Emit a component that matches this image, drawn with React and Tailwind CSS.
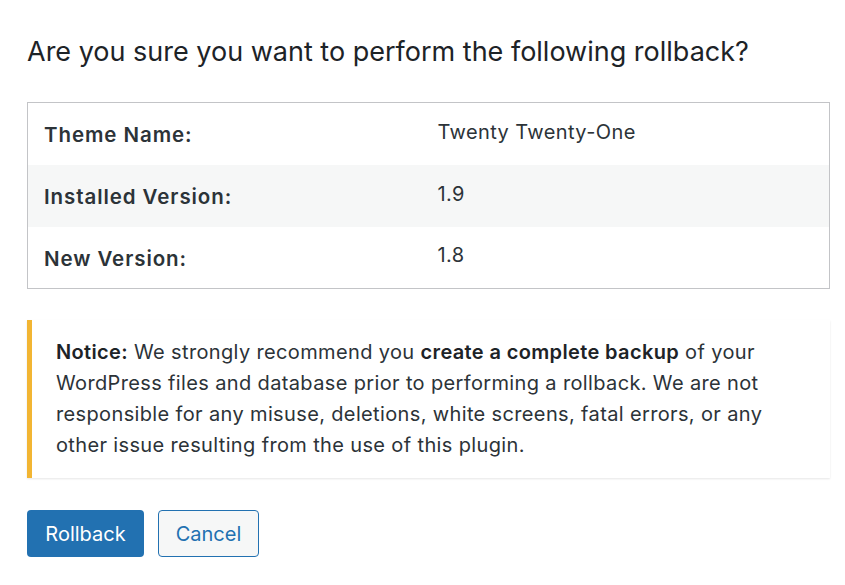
const rows = [
  { label: "Theme Name:", value: "Twenty Twenty-One" },
  { label: "Installed Version:", value: "1.9" },
  { label: "New Version:", value: "1.8" },
];

export default function App() {
  return (
    <div
      className="min-h-[585px] bg-white px-[27px] pt-[34px] text-[#2c3338]"
      style={{ fontFamily: "Inter, 'Noto Sans', sans-serif" }}
    >
      <h2 className="text-[27px] leading-[36px] text-[#1d2327]">
        Are you sure you want to perform the following rollback?
      </h2>

      <table className="mt-[32px] w-[803px] border border-[#c3c4c7] text-[20px] tracking-[0.02em]">
        <tbody>
          {rows.map((r, i) => (
            <tr key={r.label} className={i === 1 ? "bg-[#f6f7f7]" : "bg-white"}>
              <th className="h-[62px] w-[410px] pl-[16px] pt-[4px] text-left text-[20.5px] font-semibold tracking-[0.045em] text-[#2c3338]">
                {r.label}
              </th>
              <td className="h-[62px] pb-[4px] text-[#2c3338]">{r.value}</td>
            </tr>
          ))}
        </tbody>
      </table>

      <div className="mt-[31px] w-[803px] border-l-[5px] border-[#f2b533] bg-white py-[17px] pl-[24px] pr-[20px] text-[20px] leading-[31px] tracking-[0.018em] shadow-[0_1px_2px_rgba(0,0,0,0.1)]">
        <p>
          <strong className="font-semibold text-[#1d2327]">Notice:</strong> We strongly recommend
          you <strong className="font-semibold text-[#1d2327]">create a complete backup</strong> of
          your WordPress files and database prior to performing a rollback. We are not responsible
          for any misuse, deletions, white screens, fatal errors, or any other issue resulting from
          the use of this plugin.
        </p>
      </div>

      <div className="mt-[32px] flex gap-[14px]">
        <button className="h-[47px] w-[117px] rounded-[4px] bg-[#2271b1] text-[20px] text-white">
          Rollback
        </button>
        <button className="h-[47px] w-[101px] rounded-[4px] border border-[#2271b1] bg-[#f6f7f7] text-[20px] text-[#2271b1]">
          Cancel
        </button>
      </div>
    </div>
  );
}
